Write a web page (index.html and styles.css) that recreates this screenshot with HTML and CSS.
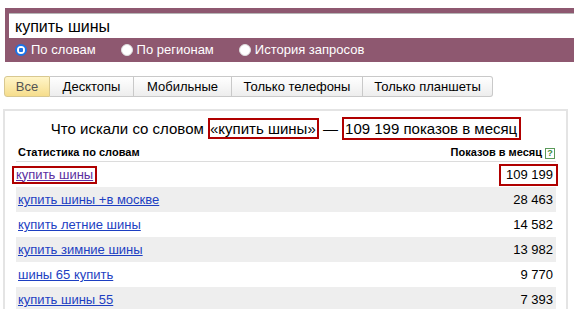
FILE: index.html
```html
<!DOCTYPE html>
<html lang="ru">
<head>
<meta charset="utf-8">
<link rel="stylesheet" href="styles.css">
</head>
<body>
<div class="search">
  <div class="input">купить шины</div>
  <div class="radios">
    <label class="radio"><span class="dot checked"></span>По словам</label>
    <label class="radio"><span class="dot"></span>По регионам</label>
    <label class="radio"><span class="dot"></span>История запросов</label>
  </div>
</div>
<div class="tabs">
  <span class="tab active t1">Все</span>
  <span class="tab t2">Десктопы</span>
  <span class="tab t3">Мобильные</span>
  <span class="tab t4">Только телефоны</span>
  <span class="tab t5">Только планшеты</span>
</div>
<div class="box">
  <div class="title">Что искали со словом <span class="mark m1">«купить шины»</span> — <span class="mark m2">109 199 показов в месяц</span></div>
  <div class="table">
    <div class="head"><span>Статистика по словам</span><span class="hr">Показов в месяц <span class="help">?</span></span></div>
    <div class="row"><a class="visited mark m3">купить шины</a><span class="mark m4">109 199</span></div>
    <div class="row odd"><a>купить шины +в москве</a><span>28 463</span></div>
    <div class="row"><a>купить летние шины</a><span>14 582</span></div>
    <div class="row odd"><a>купить зимние шины</a><span>13 982</span></div>
    <div class="row"><a>шины 65 купить</a><span>9 770</span></div>
    <div class="row odd"><a>купить шины 55</a><span>7 393</span></div>
  </div>
</div>
</body>
</html>
```

FILE: styles.css
```css
html, body {
  margin: 0;
  padding: 0;
  background: #fff;
  font-family: "Liberation Sans", Arial, sans-serif;
  color: #000;
  overflow: hidden;
}
.search {
  margin: 8px 0 0 5px;
  background: #8e5870;
  padding: 5px 0 0 4px;
  height: 49px;
}
.input {
  background: #fff;
  border-top: 1px solid #b5b5b5;
  height: 25px;
  box-sizing: border-box;
  padding: 2px 0 0 6px;
  font-size: 16px;
  line-height: 21px;
  color: #000;
}
.radios {
  display: flex;
  height: 23px;
  align-items: center;
  padding-left: 6px;
}
.radio {
  display: flex;
  align-items: center;
  color: #fff;
  font-size: 13px;
  margin-right: 25px;
}
.dot {
  width: 12px;
  height: 12px;
  border-radius: 50%;
  background: #fff;
  box-sizing: border-box;
  border: 1px solid #ddd;
  margin-right: 4px;
}
.dot.checked {
  border: 2px solid #1a73e8;
  background: radial-gradient(circle, #1a73e8 0 2px, #fff 2.5px);
}
.tabs {
  display: flex;
  margin: 14px 0 0 4px;
  height: 21px;
}
.tab {
  box-sizing: border-box;
  height: 21px;
  border: 1px solid #c9c9c9;
  border-left: none;
  background: linear-gradient(#ffffff, #ededed);
  font-size: 13px;
  line-height: 19px;
  text-align: center;
  color: #000;
}
.tab.t1 { width: 46px; border-left: 1px solid #c9c9c9; border-radius: 3px 0 0 3px; }
.tab.t2 { width: 84px; }
.tab.t3 { width: 98px; }
.tab.t4 { width: 131px; }
.tab.t5 { width: 130px; border-radius: 0 3px 3px 0; }
.tab.active {
  background: linear-gradient(#fff5c8, #f6dd8c);
  color: #555;
  border-color: #d8c890;
}
.box {
  margin: 12px 6px 0 3px;
  border: 2px solid #e4e4e4;
  border-bottom: none;
  height: 200px;
  padding: 0 10px 0 11px;
}
.title {
  text-align: center;
  font-size: 15px;
  line-height: 19px;
  padding-top: 8px;
  height: 24px;
  color: #000;
}
.mark {
  border: 2px solid #b00000;
}
.m1 { padding: 0 1px 0 0; }
.m2 { padding: 1px 2px 1px 1px; }
.head {
  display: flex;
  justify-content: space-between;
  font-size: 11px;
  font-weight: bold;
  line-height: 14px;
  padding: 2px 0 2px 2px;
  border-bottom: 1px solid #dcdcdc;
  height: 14px;
}
.hr { padding-right: 1px; }
.help {
  display: inline-block;
  width: 8px;
  height: 9px;
  border: 1px solid #5a9a5a;
  color: #3a8a3a;
  font-size: 9px;
  line-height: 9px;
  text-align: center;
  font-weight: bold;
}
.row {
  display: flex;
  justify-content: space-between;
  align-items: center;
  height: 25px;
  font-size: 13px;
  padding: 0 3px 0 2px;
}
.row.odd { background: #eeeeee; }
.row a {
  color: #1d3fc2;
  text-decoration: underline;
}
.row a.visited { color: #5a2ea0; }
.m3 { margin-left: -6px; padding: 0 2px; line-height: 14px; }
.m4 { margin-right: -5px; padding: 1px 3px 1px 5px; line-height: 16px; }
```
